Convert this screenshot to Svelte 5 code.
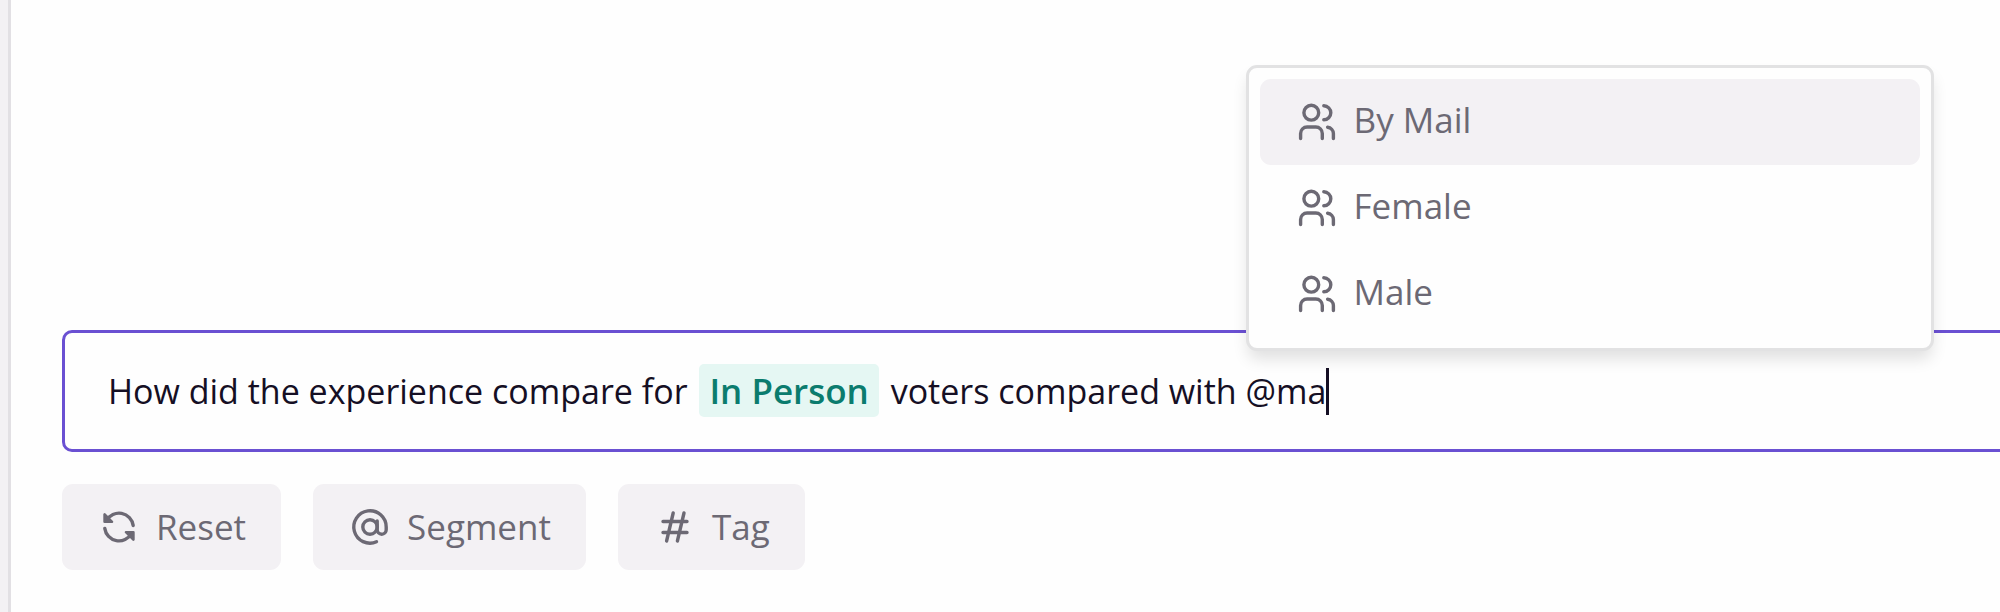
<script lang="ts">
  type Action = { id: string; label: string };

  const segments = ['By Mail', 'Female', 'Male'];
  const actions: Action[] = [
    { id: 'reset', label: 'Reset' },
    { id: 'segment', label: 'Segment' },
    { id: 'tag', label: 'Tag' }
  ];

  let active = $state(0);
</script>

{#snippet icon(name: string)}
  <svg class="icon" viewBox="0 0 44 44" aria-hidden="true">
    {#if name === 'reset'}
      <path d="M9.5 15.5A14.3 14.3 0 0 1 36.2 20.5M34.5 28.5A14.3 14.3 0 0 1 7.8 23.5" />
      <path class="solid" d="M7.6 9.4v7.4H15ZM36.4 34.6v-7.4H29Z" />
    {:else if name === 'segment'}
      <circle cx="22" cy="22" r="7.2" />
      <path d="M29.2 16v8.7a4.5 4.5 0 0 0 9 0V22A16.2 16.2 0 1 0 28.5 36.8" />
    {:else if name === 'tag'}
      <path d="M20.2 8 13.6 36M31 8 24.4 36M10 16.5H34M10 27.5H34" />
    {:else}
      <circle cx="16.3" cy="12.7" r="7.4" />
      <path d="M5.6 38.5V33.5A6.5 6.5 0 0 1 12.1 27H20.8A6.5 6.5 0 0 1 27.3 33.5V38.5" />
      <path d="M28.8 5.8A7 7 0 0 1 28.8 19.8M32.6 27.2A6.5 6.5 0 0 1 38.4 33.6V38.5" />
    {/if}
  </svg>
{/snippet}

<main class="panel">
  <div class="editor" role="textbox" aria-label="Question" tabindex="0" contenteditable="true">
    How did the experience compare for <span class="chip">In Person</span> voters compared with
    <span class="mention">@ma<span class="caret"></span><span class="menu" role="listbox" aria-label="Segments" contenteditable="false">
        {#each segments as segment, i}
          <button
            class="option"
            class:active={active === i}
            type="button"
            role="option"
            aria-selected={active === i}
            onmouseenter={() => (active = i)}
          >
            {@render icon('users')}
            <span class="label">{segment}</span>
          </button>
        {/each}
      </span></span>
  </div>

  <div class="actions">
    {#each actions as action}
      <button class="action" type="button">
        {@render icon(action.id)}
        <span>{action.label}</span>
      </button>
    {/each}
  </div>
</main>

<style>
  :global(body) {
    background: #f3f1f4;
  }

  .panel {
    box-sizing: border-box;
    display: flex;
    flex-direction: column;
    justify-content: flex-end;
    gap: 32px;
    min-height: 100vh;
    margin-left: 8px;
    padding: 0 0 42px 51px;
    border-left: 3px solid #e2e0e4;
    background: #fefefe;
    color: #150f24;
    font-family: 'Open Sans', 'Noto Sans', sans-serif;
    font-size: 35px;
    overflow: hidden;
  }

  .editor {
    margin-right: -20px;
    padding: 31px 43px;
    border: 3px solid #6a50d2;
    border-radius: 10px;
    outline: none;
    font-size: 34px;
    line-height: 53px;
  }

  .chip {
    display: inline-block;
    margin: 0 3px;
    padding: 0 10px;
    border-radius: 5px;
    background: #e5f7f3;
    color: #0b7c6e;
    font-size: 35px;
    font-weight: 600;
  }

  .mention {
    position: relative;
    display: inline-block;
  }

  .caret {
    display: inline-block;
    width: 3px;
    height: 47px;
    margin-right: -3px;
    background: #150f24;
    vertical-align: -11px;
  }

  .menu {
    position: absolute;
    bottom: 67px;
    left: 0;
    box-sizing: border-box;
    display: flex;
    flex-direction: column;
    width: 688px;
    padding: 11px;
    border: 3px solid #e2e2e3;
    border-radius: 11px;
    background: #fefefe;
    box-shadow: 0 10px 16px -2px rgba(0, 0, 0, 0.12);
  }

  button {
    display: flex;
    align-items: center;
    gap: 15px;
    height: 86px;
    padding: 0 35px;
    border: none;
    border-radius: 11px;
    background: transparent;
    color: #6c6974;
    font: inherit;
    font-size: 35px;
    font-weight: 500;
    line-height: 48px;
    cursor: pointer;
  }

  .label {
    padding-bottom: 4px;
  }

  .option.active,
  .action {
    background: #f3f1f4;
  }

  .actions {
    display: flex;
    gap: 32px;
  }

  .icon {
    flex: none;
    width: 44px;
    height: 44px;
    fill: none;
    stroke: currentColor;
    stroke-width: 3.4;
    stroke-linecap: round;
    stroke-linejoin: round;
  }

  .solid {
    fill: currentColor;
    stroke-width: 2.6;
  }
</style>
